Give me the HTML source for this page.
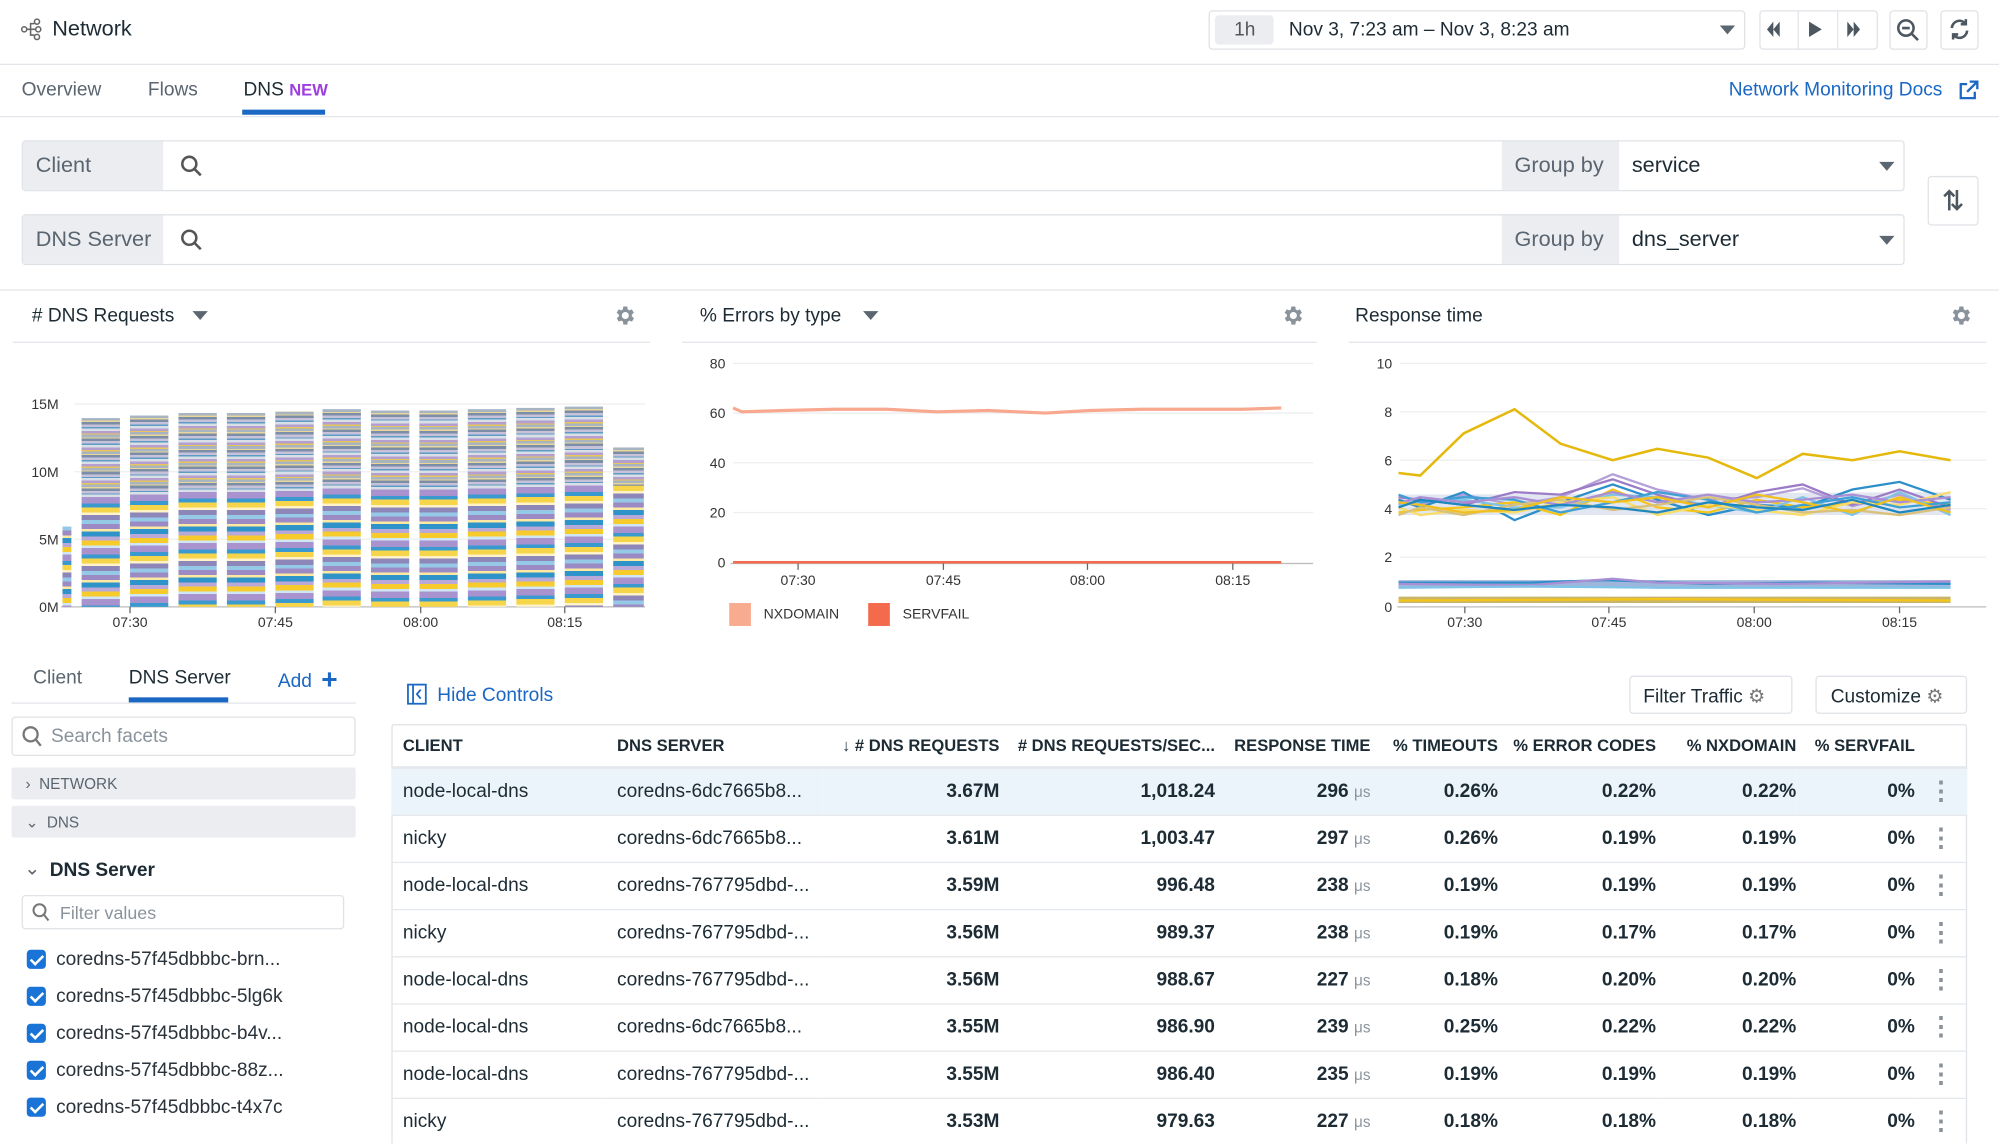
<!DOCTYPE html>
<html><head><meta charset="utf-8"><style>
*{box-sizing:border-box;margin:0;padding:0}
html,body{width:1999px;height:1143px;overflow:hidden;background:#fff}
#w{position:absolute;left:0;top:0;width:1568px;height:897px;overflow:hidden;transform:scale(1.27487);transform-origin:0 0;font-family:"Liberation Sans",sans-serif;color:#1c2b34}
.a{position:absolute}
.t{position:absolute;white-space:nowrap}
.hl{position:absolute;height:1px;background:#e2e5ea}
.box{position:absolute;border:1px solid #dfe2e6;border-radius:3px;background:#fff}
.gl{position:absolute;background:#ebedf0;color:#5a6570;font-size:17px;display:flex;align-items:center;padding-left:10px}
.tri{position:absolute;width:0;height:0;border-left:6px solid transparent;border-right:6px solid transparent;border-top:7px solid #5b6670}
.bar{position:absolute;width:30px;background:repeating-linear-gradient(180deg,#96c9e6 0 3px,#9b8ac4 3px 7px,#fde9a1 7px 9px,#2e93c9 9px 13px,#b9a9d8 13px 16px,#f8cb2c 16px 20px,#cfe7f4 20px 22px,#a993cf 22px 27px,#3a9ad0 27px 30px,#f6d54b 30px 34px,#fff3c7 34px 36px,#8d86b9 36px 40px)}
.bar .top{position:absolute;left:0;right:0;top:0;height:62px;background:repeating-linear-gradient(180deg,#a8b4c2 0 2px,#e8d69a 2px 3px,#7c8ea7 3px 5px,#c7c2da 5px 7px,#5d9cc4 7px 8px,#d9dfe6 8px 10px,#b49fd0 10px 12px,#e7c65a 12px 13px)}
.cb{position:absolute;left:21px;width:15px;height:15px;border-radius:3px;background:#1a73d6}
.cb:after{content:"";position:absolute;left:5px;top:2px;width:4px;height:8px;border:solid #fff;border-width:0 2px 2px 0;transform:rotate(45deg)}
.fi{position:absolute;left:44px;font-size:15px;color:#2a323a}
table{position:absolute;left:307px;top:568px;width:1236px;border-collapse:collapse;font-size:15px}
th{height:34px;font-size:13px;font-weight:bold;text-align:right;color:#1c2b34;border-bottom:2px solid #e4e7eb;white-space:nowrap}
td{height:37px;border-bottom:1px solid #e4e7eb;text-align:right;font-weight:bold;white-space:nowrap}
td.l,th.l{text-align:left;font-weight:normal;padding-left:9px}
th.l{font-weight:bold}
tr.sel td{background:#ecf4fb}
.us{font-weight:normal;color:#8a939b;font-size:12px}
.dots{color:#8a939b;font-size:20px;text-align:center;font-weight:bold}
</style></head><body><div id="w">

<svg class="a" style="left:16px;top:14px" width="18" height="18" viewBox="0 0 18 18" fill="none" stroke="#666" stroke-width="1.2"><circle cx="3" cy="9" r="2"/><circle cx="13" cy="3" r="2"/><circle cx="14" cy="9" r="2"/><circle cx="13" cy="15" r="2"/><path d="M5 9h7M8 9V4.5h3M8 9v4.5h3"/></svg>
<div class="t" style="left:41px;top:13px;font-size:17px">Network</div>
<div class="box" style="left:948px;top:8px;width:421px;height:31px"></div>
<div class="a" style="left:953px;top:12px;width:46px;height:23px;background:#ebedf0;border-radius:3px"></div>
<div class="t" style="left:968px;top:15px;font-size:15px;color:#555">1h</div>
<div class="t" style="left:1011px;top:15px;font-size:15px">Nov 3, 7:23 am – Nov 3, 8:23 am</div>
<div class="tri" style="left:1349px;top:20px"></div>
<div class="box" style="left:1380px;top:8px;width:93px;height:31px"></div>
<div class="a" style="left:1410px;top:9px;width:1px;height:29px;background:#e2e5ea"></div>
<div class="a" style="left:1441px;top:9px;width:1px;height:29px;background:#e2e5ea"></div>
<svg class="a" style="left:1385px;top:14px" width="84" height="18" viewBox="0 0 84 18" fill="#4d5760"><path d="M6 9l5-6v12zM1 9l5-6v12zM34 3l10 6-10 6zM64 3l5 6-5 6zM69 3l5 6-5 6z"/></svg>
<div class="box" style="left:1482px;top:8px;width:30px;height:31px"></div>
<svg class="a" style="left:1487px;top:14px" width="20" height="20" viewBox="0 0 20 20" fill="none" stroke="#4d5760" stroke-width="2"><circle cx="8" cy="8" r="6"/><path d="M12.5 12.5l5 5M5 8h6"/></svg>
<div class="box" style="left:1522px;top:8px;width:30px;height:31px"></div>
<svg class="a" style="left:1528px;top:14px" width="18" height="18" viewBox="0 0 18 18" fill="none" stroke="#4d5760" stroke-width="2"><path d="M3 8a6 6 0 0 1 11-3M15 10a6 6 0 0 1-11 3"/><path d="M14 1v4h-4M4 17v-4h4"/></svg>
<div class="hl" style="left:0;top:50px;width:1568px"></div>

<div class="t" style="left:17px;top:62px;font-size:15px;color:#5a6570">Overview</div>
<div class="t" style="left:116px;top:62px;font-size:15px;color:#5a6570">Flows</div>
<div class="t" style="left:191px;top:62px;font-size:15px">DNS <span style="color:#9c3ee0;font-weight:bold;font-size:13px">NEW</span></div>
<div class="a" style="left:190px;top:86px;width:65px;height:4px;background:#1a67c4"></div>
<div class="hl" style="left:0;top:91px;width:1568px"></div>
<div class="t" style="left:1356px;top:62px;font-size:15px;color:#1a67c4">Network Monitoring Docs</div>
<svg class="a" style="left:1536px;top:63px" width="16" height="16" viewBox="0 0 16 16" fill="none" stroke="#1a67c4" stroke-width="1.8"><path d="M7 3H2v11h11V9M9 1h6v6M15 1L7 9"/></svg>

<div class="box" style="left:17px;top:110px;width:1477px;height:40px"></div>
<div class="gl" style="left:18px;top:111px;width:110px;height:38px">Client</div>
<svg class="a" style="left:141px;top:121px" width="18" height="18" viewBox="0 0 18 18" fill="none" stroke="#555" stroke-width="2"><circle cx="7.5" cy="7.5" r="5.5"/><path d="M11.5 11.5l5 5"/></svg>
<div class="gl" style="left:1178px;top:111px;width:92px;height:38px">Group by</div>
<div class="t" style="left:1280px;top:120px;font-size:17px">service</div>
<div class="tri" style="left:1474px;top:127px"></div>

<div class="box" style="left:17px;top:168px;width:1477px;height:40px"></div>
<div class="gl" style="left:18px;top:169px;width:110px;height:38px">DNS Server</div>
<svg class="a" style="left:141px;top:179px" width="18" height="18" viewBox="0 0 18 18" fill="none" stroke="#555" stroke-width="2"><circle cx="7.5" cy="7.5" r="5.5"/><path d="M11.5 11.5l5 5"/></svg>
<div class="gl" style="left:1178px;top:169px;width:92px;height:38px">Group by</div>
<div class="t" style="left:1280px;top:178px;font-size:17px">dns_server</div>
<div class="tri" style="left:1474px;top:185px"></div>

<div class="box" style="left:1512px;top:138px;width:40px;height:39px"></div>
<svg class="a" style="left:1522px;top:147px" width="20" height="20" viewBox="0 0 20 20" fill="none" stroke="#4d5760" stroke-width="2"><path d="M7 18V3M3 7l4-4 4 4M13 2v15M9 13l4 4 4-4"/></svg>
<div class="hl" style="left:0;top:227px;width:1568px"></div>

<div class="t" style="left:25px;top:239px;font-size:15px"># DNS Requests</div>
<div class="tri" style="left:151px;top:244px"></div>
<div class="t" style="left:549px;top:239px;font-size:15px">% Errors by type</div>
<div class="tri" style="left:677px;top:244px"></div>
<div class="t" style="left:1063px;top:239px;font-size:15px">Response time</div>
<svg class="a" style="left:481px;top:238px" width="19" height="19" viewBox="0 0 24 24" fill="#8a939b"><path d="M19.4 13a7.5 7.5 0 0 0 0-2l2.1-1.6-2-3.5-2.5 1a7.7 7.7 0 0 0-1.7-1L15 3h-4l-.4 2.9a7.7 7.7 0 0 0-1.7 1l-2.5-1-2 3.5L6.6 11a7.5 7.5 0 0 0 0 2l-2.1 1.6 2 3.5 2.5-1a7.7 7.7 0 0 0 1.7 1L11 21h4l.4-2.9a7.7 7.7 0 0 0 1.7-1l2.5 1 2-3.5zM13 15.5a3.5 3.5 0 1 1 0-7 3.5 3.5 0 0 1 0 7z" transform="translate(-1 0)"/></svg>
<svg class="a" style="left:1005px;top:238px" width="19" height="19" viewBox="0 0 24 24" fill="#8a939b"><path d="M19.4 13a7.5 7.5 0 0 0 0-2l2.1-1.6-2-3.5-2.5 1a7.7 7.7 0 0 0-1.7-1L15 3h-4l-.4 2.9a7.7 7.7 0 0 0-1.7 1l-2.5-1-2 3.5L6.6 11a7.5 7.5 0 0 0 0 2l-2.1 1.6 2 3.5 2.5-1a7.7 7.7 0 0 0 1.7 1L11 21h4l.4-2.9a7.7 7.7 0 0 0 1.7-1l2.5 1 2-3.5zM13 15.5a3.5 3.5 0 1 1 0-7 3.5 3.5 0 0 1 0 7z" transform="translate(-1 0)"/></svg>
<svg class="a" style="left:1529px;top:238px" width="19" height="19" viewBox="0 0 24 24" fill="#8a939b"><path d="M19.4 13a7.5 7.5 0 0 0 0-2l2.1-1.6-2-3.5-2.5 1a7.7 7.7 0 0 0-1.7-1L15 3h-4l-.4 2.9a7.7 7.7 0 0 0-1.7 1l-2.5-1-2 3.5L6.6 11a7.5 7.5 0 0 0 0 2l-2.1 1.6 2 3.5 2.5-1a7.7 7.7 0 0 0 1.7 1L11 21h4l.4-2.9a7.7 7.7 0 0 0 1.7-1l2.5 1 2-3.5zM13 15.5a3.5 3.5 0 1 1 0-7 3.5 3.5 0 0 1 0 7z" transform="translate(-1 0)"/></svg>
<div class="hl" style="left:10px;top:268px;width:500px"></div>
<div class="hl" style="left:535px;top:268px;width:498px"></div>
<div class="hl" style="left:1058px;top:268px;width:500px"></div>

<svg class="a" style="left:0;top:300px" width="520" height="200" font-family="Liberation Sans" font-size="11" fill="#333">
<g stroke="#eee"><line x1="58" y1="17" x2="506" y2="17"/><line x1="58" y1="70" x2="506" y2="70"/><line x1="58" y1="123" x2="506" y2="123"/></g>
<text x="46" y="21" text-anchor="end">15M</text><text x="46" y="74" text-anchor="end">10M</text><text x="46" y="127" text-anchor="end">5M</text><text x="46" y="180" text-anchor="end">0M</text>
<line x1="48" y1="176" x2="506" y2="176" stroke="#bbb"/>
<g stroke="#666"><line x1="102" y1="176" x2="102" y2="181"/><line x1="216" y1="176" x2="216" y2="181"/><line x1="330" y1="176" x2="330" y2="181"/><line x1="443" y1="176" x2="443" y2="181"/></g>
<text x="102" y="192" text-anchor="middle">07:30</text><text x="216" y="192" text-anchor="middle">07:45</text><text x="330" y="192" text-anchor="middle">08:00</text><text x="443" y="192" text-anchor="middle">08:15</text>
</svg>
<div class="bar" style="left:49px;top:413px;height:63px;width:7px"></div>
<div class="bar" style="left:64px;top:328px;height:148px"><div class="top"></div></div>
<div class="bar" style="left:102px;top:326px;height:150px"><div class="top"></div></div>
<div class="bar" style="left:140px;top:324px;height:152px"><div class="top"></div></div>
<div class="bar" style="left:178px;top:324px;height:152px"><div class="top"></div></div>
<div class="bar" style="left:216px;top:323px;height:153px"><div class="top"></div></div>
<div class="bar" style="left:253px;top:321px;height:155px"><div class="top"></div></div>
<div class="bar" style="left:291px;top:322px;height:154px"><div class="top"></div></div>
<div class="bar" style="left:329px;top:322px;height:154px"><div class="top"></div></div>
<div class="bar" style="left:367px;top:321px;height:155px"><div class="top"></div></div>
<div class="bar" style="left:405px;top:320px;height:156px"><div class="top"></div></div>
<div class="bar" style="left:443px;top:319px;height:157px"><div class="top"></div></div>
<div class="bar" style="left:481px;top:351px;height:125px;width:24px"><div class="top" style="height:30px"></div></div>

<svg class="a" style="left:535px;top:270px" width="500" height="230" font-family="Liberation Sans" font-size="11" fill="#333">
<g stroke="#eee"><line x1="40" y1="15" x2="495" y2="15"/><line x1="40" y1="54" x2="495" y2="54"/><line x1="40" y1="93" x2="495" y2="93"/><line x1="40" y1="132" x2="495" y2="132"/></g>
<text x="34" y="19" text-anchor="end">80</text><text x="34" y="58" text-anchor="end">60</text><text x="34" y="97" text-anchor="end">40</text><text x="34" y="136" text-anchor="end">20</text><text x="34" y="175" text-anchor="end">0</text>
<line x1="38" y1="172" x2="495" y2="172" stroke="#bbb"/>
<line x1="40" y1="171" x2="470" y2="171" stroke="#f36a4d" stroke-width="2"/>
<polyline fill="none" stroke="#f8a88f" stroke-width="2.5" points="40,50 47,53 80,52 120,51 160,51 200,53 240,52 285,54 320,52 360,51 400,51 440,51 470,50"/>
<g stroke="#666"><line x1="91" y1="172" x2="91" y2="177"/><line x1="205" y1="172" x2="205" y2="177"/><line x1="318" y1="172" x2="318" y2="177"/><line x1="432" y1="172" x2="432" y2="177"/></g>
<text x="91" y="189" text-anchor="middle">07:30</text><text x="205" y="189" text-anchor="middle">07:45</text><text x="318" y="189" text-anchor="middle">08:00</text><text x="432" y="189" text-anchor="middle">08:15</text>
<rect x="37" y="203" width="17" height="18" fill="#f9ab8f"/><text x="64" y="215">NXDOMAIN</text>
<rect x="146" y="203" width="17" height="18" fill="#f36a4d"/><text x="173" y="215">SERVFAIL</text>
</svg>

<svg class="a" style="left:1058px;top:270px" width="510" height="230" font-family="Liberation Sans" font-size="11" fill="#333">
<g stroke="#eee"><line x1="40" y1="15" x2="500" y2="15"/><line x1="40" y1="53" x2="500" y2="53"/><line x1="40" y1="91" x2="500" y2="91"/><line x1="40" y1="129" x2="500" y2="129"/><line x1="40" y1="167" x2="500" y2="167"/></g>
<text x="34" y="19" text-anchor="end">10</text><text x="34" y="57" text-anchor="end">8</text><text x="34" y="95" text-anchor="end">6</text><text x="34" y="133" text-anchor="end">4</text><text x="34" y="171" text-anchor="end">2</text><text x="34" y="210" text-anchor="end">0</text>
<line x1="38" y1="206" x2="500" y2="206" stroke="#bbb"/>
<g transform="translate(-1058 -270)" fill="none" stroke-width="1.8">
<path d="M1097,388 L1530,386 L1530,404 L1097,404Z" fill="#cfd6e8" stroke="none" opacity="0.6"/>
<polyline stroke="#b49fd8" points="1097,392 1114,396 1148,388 1188,396 1224,390 1265,372 1300,384 1340,392 1378,390 1414,383 1453,397 1490,388 1530,400"/>
<polyline stroke="#2d8fc9" points="1097,392 1114,398 1148,386 1188,408 1224,394 1265,380 1300,392 1340,404 1378,396 1414,398 1453,384 1490,378 1530,392"/>
<polyline stroke="#f5c518" points="1097,402 1114,400 1148,398 1188,394 1224,404 1265,384 1300,398 1340,402 1378,392 1414,398 1453,395 1490,392 1530,396"/>
<polyline stroke="#7fc3e6" points="1097,396 1114,393 1148,392 1188,398 1224,398 1265,388 1300,390 1340,396 1378,402 1414,390 1453,404 1490,386 1530,404"/>
<polyline stroke="#9c7cc7" points="1097,390 1114,392 1148,396 1188,386 1224,388 1265,376 1300,388 1340,398 1378,386 1414,380 1453,396 1490,384 1530,398"/>
<polyline stroke="#f8dd6a" points="1097,398 1114,404 1148,400 1188,402 1224,394 1265,390 1300,404 1340,396 1378,400 1414,404 1453,394 1490,396 1530,386"/>
<polyline stroke="#3fa0d6" points="1097,388 1114,394 1148,390 1188,392 1224,402 1265,394 1300,386 1340,392 1378,402 1414,396 1453,390 1490,398 1530,394"/>
<polyline stroke="#d9c17a" points="1097,404 1114,398 1148,404 1188,396 1224,392 1265,400 1300,396 1340,390 1378,396 1414,402 1453,400 1490,404 1530,398"/>
<polyline stroke="#a98fd3" points="1097,395 1114,390 1148,394 1188,390 1224,396 1265,386 1300,394 1340,388 1378,394 1414,392 1453,388 1490,394 1530,390"/>
<polyline stroke="#f0c020" points="1097,394 1114,396 1148,402 1188,400 1224,390 1265,394 1300,390 1340,398 1378,388 1414,394 1453,402 1490,390 1530,402"/>
<polyline stroke="#1f87c0" points="1097,398 1114,392 1148,396 1188,400 1224,396 1265,398 1300,402 1340,394 1378,398 1414,400 1453,392 1490,402 1530,396"/>
<polyline stroke="#e5b90c" stroke-width="2" points="1097,371 1114,373 1148,340 1188,321 1224,348 1265,361 1300,352 1340,359 1378,375 1414,356 1453,361 1490,354 1530,361"/>
<path d="M1097,455 L1530,455 L1530,461 L1097,461Z" fill="#9fb6dc" stroke="none"/>
<polyline stroke="#2d8fc9" points="1097,457 1200,457 1260,455 1340,458 1420,457 1530,458"/>
<polyline stroke="#a98fd3" points="1097,458 1200,459 1265,454 1300,457 1400,458 1530,456"/>
<polyline stroke="#7fc3e6" points="1097,461 1200,460 1300,461 1400,461 1530,461"/>
<path d="M1097,468 L1530,468 L1530,473 L1097,473Z" fill="#c9b56a" stroke="none"/>
<polyline stroke="#f5c518" points="1097,471 1300,470 1530,471"/>
</g>
<g stroke="#666"><line x1="91" y1="206" x2="91" y2="211"/><line x1="204" y1="206" x2="204" y2="211"/><line x1="318" y1="206" x2="318" y2="211"/><line x1="432" y1="206" x2="432" y2="211"/></g>
<text x="91" y="222" text-anchor="middle">07:30</text><text x="204" y="222" text-anchor="middle">07:45</text><text x="318" y="222" text-anchor="middle">08:00</text><text x="432" y="222" text-anchor="middle">08:15</text>
</svg>

<div class="t" style="left:26px;top:523px;font-size:15px;color:#5a6570">Client</div>
<div class="t" style="left:101px;top:523px;font-size:15px">DNS Server</div>
<div class="a" style="left:101px;top:547px;width:78px;height:4px;background:#1a67c4"></div>
<div class="t" style="left:218px;top:526px;font-size:15px;color:#1a67c4">Add</div>
<div class="t" style="left:252px;top:520px;font-size:22px;font-weight:bold;color:#1a67c4">+</div>
<div class="hl" style="left:9px;top:551px;width:270px"></div>
<div class="box" style="left:9px;top:562px;width:270px;height:31px"></div>
<svg class="a" style="left:17px;top:569px" width="16" height="17" viewBox="0 0 16 17" fill="none" stroke="#777" stroke-width="1.8"><circle cx="7" cy="7" r="5.5"/><path d="M11 11l4 5"/></svg>
<div class="t" style="left:40px;top:569px;font-size:15px;color:#8a939b">Search facets</div>
<div class="a" style="left:9px;top:602px;width:270px;height:25px;background:#ebedf0;border-radius:2px"></div>
<div class="t" style="left:20px;top:608px;font-size:12px;color:#5a6570">›&nbsp; NETWORK</div>
<div class="a" style="left:9px;top:632px;width:270px;height:25px;background:#ebedf0;border-radius:2px"></div>
<div class="t" style="left:20px;top:638px;font-size:12px;color:#5a6570">⌄&nbsp; DNS</div>
<div class="t" style="left:19px;top:672px;font-size:15px;color:#5a6570">⌄</div>
<div class="t" style="left:39px;top:674px;font-size:15px;font-weight:bold">DNS Server</div>
<div class="box" style="left:17px;top:702px;width:253px;height:27px"></div>
<svg class="a" style="left:25px;top:708px" width="14" height="15" viewBox="0 0 14 15" fill="none" stroke="#777" stroke-width="1.6"><circle cx="6" cy="6" r="4.7"/><path d="M9.5 9.5l3.5 4.5"/></svg>
<div class="t" style="left:47px;top:708px;font-size:14px;color:#8a939b">Filter values</div>
<div class="cb" style="top:745px"></div><div class="fi" style="top:744px">coredns-57f45dbbbc-brn...</div>
<div class="cb" style="top:774px"></div><div class="fi" style="top:773px">coredns-57f45dbbbc-5lg6k</div>
<div class="cb" style="top:803px"></div><div class="fi" style="top:802px">coredns-57f45dbbbc-b4v...</div>
<div class="cb" style="top:832px"></div><div class="fi" style="top:831px">coredns-57f45dbbbc-88z...</div>
<div class="cb" style="top:861px"></div><div class="fi" style="top:860px">coredns-57f45dbbbc-t4x7c</div>

<svg class="a" style="left:319px;top:536px" width="16" height="17" viewBox="0 0 16 17" fill="none" stroke="#1a67c4" stroke-width="1.4"><rect x="1" y="1" width="14" height="15"/><path d="M5 1v15M11 5l-3 3.5 3 3.5"/></svg>
<div class="t" style="left:343px;top:537px;font-size:15px;color:#1a67c4">Hide Controls</div>
<div class="box" style="left:1278px;top:530px;width:128px;height:30px"></div>
<div class="t" style="left:1289px;top:537px;font-size:15px">Filter Traffic <span style="color:#777">⚙</span></div>
<div class="box" style="left:1424px;top:530px;width:119px;height:30px"></div>
<div class="t" style="left:1436px;top:537px;font-size:15px">Customize <span style="color:#777">⚙</span></div>
<div class="box" style="left:307px;top:568px;width:1236px;height:340px;border-radius:2px"></div>

<table>
<colgroup><col style="width:168px"><col style="width:170px"><col style="width:139px"><col style="width:169px"><col style="width:122px"><col style="width:100px"><col style="width:124px"><col style="width:110px"><col style="width:93px"><col style="width:41px"></colgroup>
<tr><th class="l">CLIENT</th><th class="l">DNS SERVER</th><th>↓ # DNS REQUESTS</th><th># DNS REQUESTS/SEC...</th><th>RESPONSE TIME</th><th>% TIMEOUTS</th><th>% ERROR CODES</th><th>% NXDOMAIN</th><th>% SERVFAIL</th><th></th></tr>
<tr class="sel"><td class="l">node-local-dns</td><td class="l">coredns-6dc7665b8...</td><td>3.67M</td><td>1,018.24</td><td>296 <span class="us">μs</span></td><td>0.26%</td><td>0.22%</td><td>0.22%</td><td>0%</td><td class="dots">⋮</td></tr>
<tr><td class="l">nicky</td><td class="l">coredns-6dc7665b8...</td><td>3.61M</td><td>1,003.47</td><td>297 <span class="us">μs</span></td><td>0.26%</td><td>0.19%</td><td>0.19%</td><td>0%</td><td class="dots">⋮</td></tr>
<tr><td class="l">node-local-dns</td><td class="l">coredns-767795dbd-...</td><td>3.59M</td><td>996.48</td><td>238 <span class="us">μs</span></td><td>0.19%</td><td>0.19%</td><td>0.19%</td><td>0%</td><td class="dots">⋮</td></tr>
<tr><td class="l">nicky</td><td class="l">coredns-767795dbd-...</td><td>3.56M</td><td>989.37</td><td>238 <span class="us">μs</span></td><td>0.19%</td><td>0.17%</td><td>0.17%</td><td>0%</td><td class="dots">⋮</td></tr>
<tr><td class="l">node-local-dns</td><td class="l">coredns-767795dbd-...</td><td>3.56M</td><td>988.67</td><td>227 <span class="us">μs</span></td><td>0.18%</td><td>0.20%</td><td>0.20%</td><td>0%</td><td class="dots">⋮</td></tr>
<tr><td class="l">node-local-dns</td><td class="l">coredns-6dc7665b8...</td><td>3.55M</td><td>986.90</td><td>239 <span class="us">μs</span></td><td>0.25%</td><td>0.22%</td><td>0.22%</td><td>0%</td><td class="dots">⋮</td></tr>
<tr><td class="l">node-local-dns</td><td class="l">coredns-767795dbd-...</td><td>3.55M</td><td>986.40</td><td>235 <span class="us">μs</span></td><td>0.19%</td><td>0.19%</td><td>0.19%</td><td>0%</td><td class="dots">⋮</td></tr>
<tr><td class="l">nicky</td><td class="l">coredns-767795dbd-...</td><td>3.53M</td><td>979.63</td><td>227 <span class="us">μs</span></td><td>0.18%</td><td>0.18%</td><td>0.18%</td><td>0%</td><td class="dots">⋮</td></tr>
</table>
</div></body></html>
